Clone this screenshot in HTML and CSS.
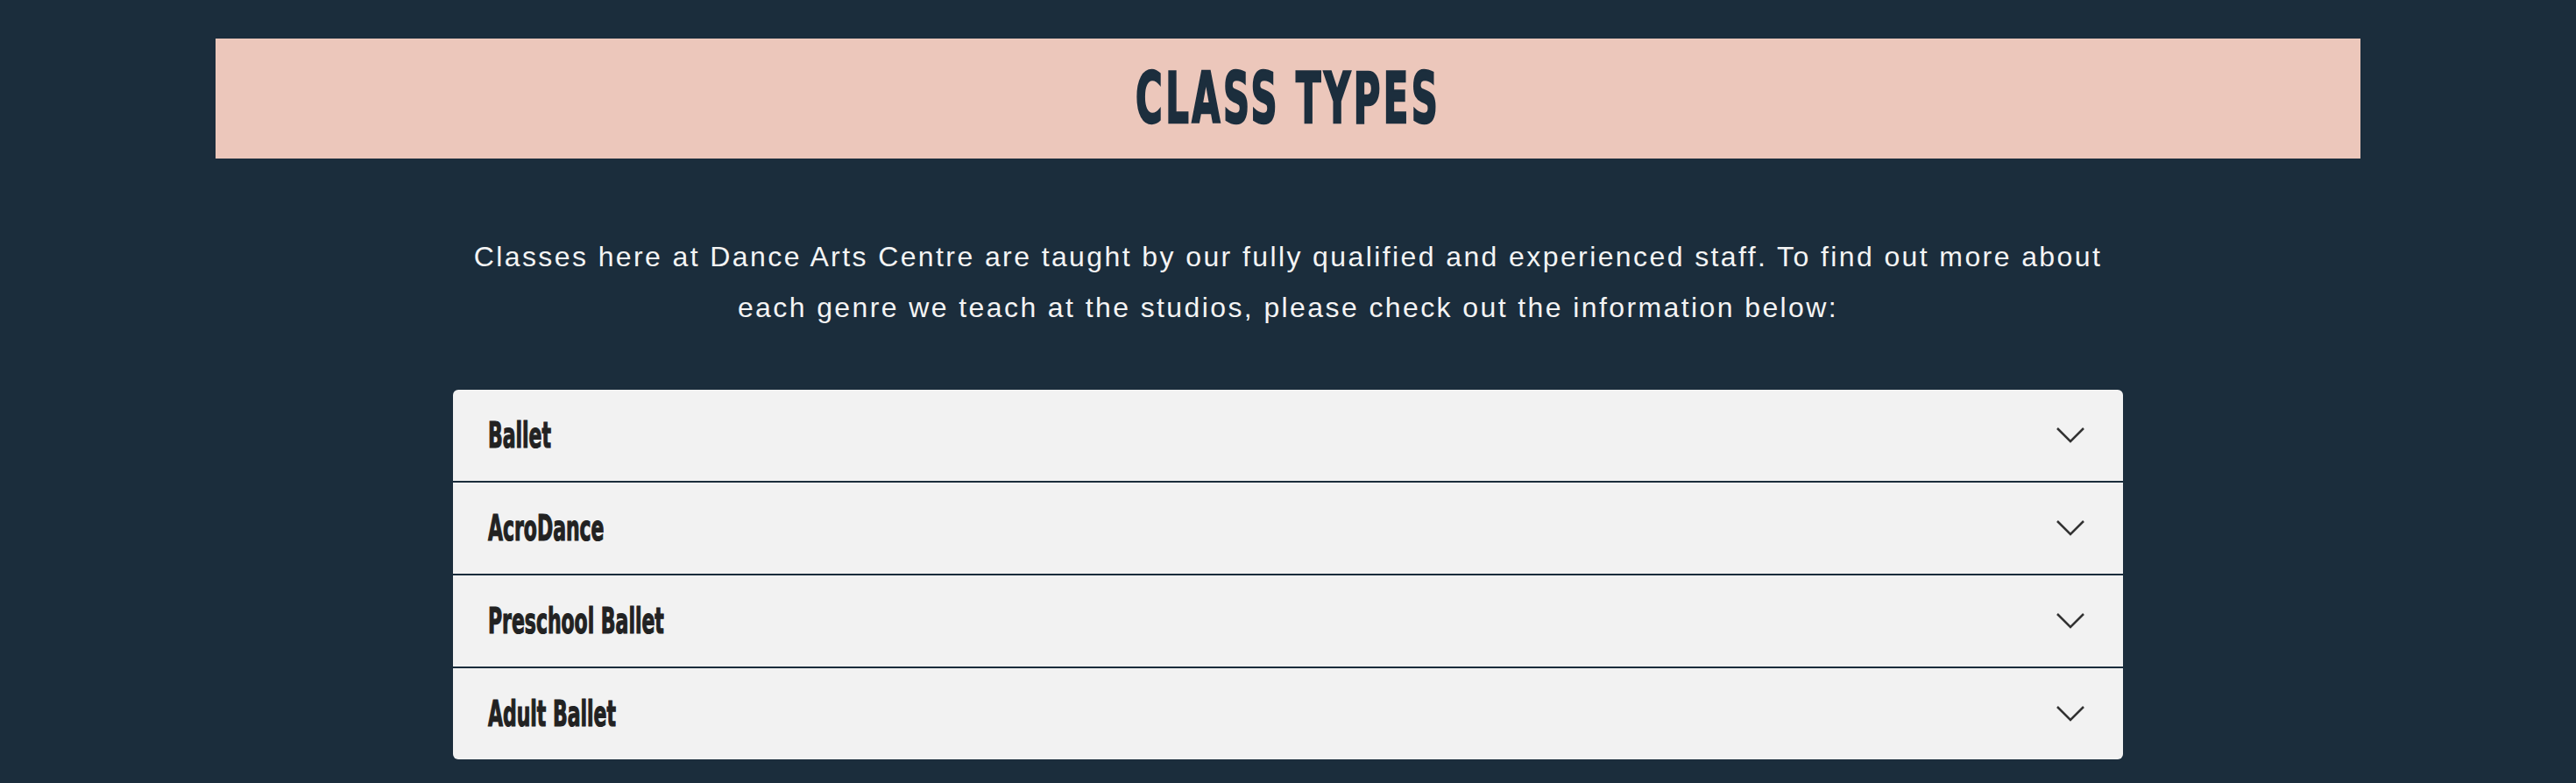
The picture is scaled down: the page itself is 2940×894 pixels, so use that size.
FILE: index.html
```
<!DOCTYPE html>
<html lang="en">
<head>
<meta charset="utf-8">
<title>Class Types</title>
<link rel="stylesheet" href="styles.css">
</head>
<body>
<section class="classes">
  <header class="banner">
    <h1 class="banner-title">CLASS TYPES</h1>
  </header>
  <p class="intro">Classes here at Dance Arts Centre are taught by our fully qualified and experienced staff. To find out more about each genre we teach at the studios, please check out the information below:</p>
  <div class="accordion">
    <div class="acc-item"><span class="acc-label">Ballet</span><svg class="chev" viewBox="0 0 32 18" width="32" height="18"><path d="M1 1 L16 16 L31 1"/></svg></div>
    <div class="acc-item"><span class="acc-label">AcroDance</span><svg class="chev" viewBox="0 0 32 18" width="32" height="18"><path d="M1 1 L16 16 L31 1"/></svg></div>
    <div class="acc-item"><span class="acc-label">Preschool Ballet</span><svg class="chev" viewBox="0 0 32 18" width="32" height="18"><path d="M1 1 L16 16 L31 1"/></svg></div>
    <div class="acc-item"><span class="acc-label">Adult Ballet</span><svg class="chev" viewBox="0 0 32 18" width="32" height="18"><path d="M1 1 L16 16 L31 1"/></svg></div>
  </div>
</section>
</body>
</html>
```
FILE: styles.css
```
html, body {
  margin: 0;
  padding: 0;
  background: #1b2d3c;
}
.classes {
  padding-top: 44px;
  display: flex;
  flex-direction: column;
  align-items: center;
}
.banner {
  width: 2448px;
  height: 137px;
  background: #ecc7bb;
  display: flex;
  align-items: center;
  justify-content: center;
}
.banner-title {
  margin: 0;
  font-family: "DejaVu Sans Condensed", "Liberation Sans", sans-serif;
  font-weight: 700;
  font-size: 80px;
  line-height: 1;
  letter-spacing: 6px;
  color: #1c2e3d;
  -webkit-text-stroke: 2.5px #1c2e3d;
  transform: scaleX(0.58);
}
.intro {
  margin: 83px 0 0;
  max-width: 1906px;
  font-family: "Liberation Sans", Arial, sans-serif;
  font-size: 32px;
  line-height: 58px;
  letter-spacing: 2.4px;
  color: #f4f4f4;
  text-align: center;
}
.accordion {
  margin-top: 65px;
  width: 1906px;
  background: #f2f2f2;
  border-radius: 6px;
  overflow: hidden;
}
.acc-item {
  height: 104px;
  padding: 0 44px 0 40px;
  display: flex;
  align-items: center;
  justify-content: space-between;
}
.acc-item + .acc-item {
  border-top: 2px solid #1b2d3c;
}
.acc-label {
  font-family: "DejaVu Sans Condensed", "Liberation Sans", sans-serif;
  font-weight: 700;
  font-size: 40px;
  line-height: 1;
  color: #222222;
  -webkit-text-stroke: 1.2px #222222;
  transform: scaleX(0.61);
  transform-origin: left center;
}
.chev {
  fill: none;
  stroke: #333333;
  stroke-width: 2.5;
}
```
